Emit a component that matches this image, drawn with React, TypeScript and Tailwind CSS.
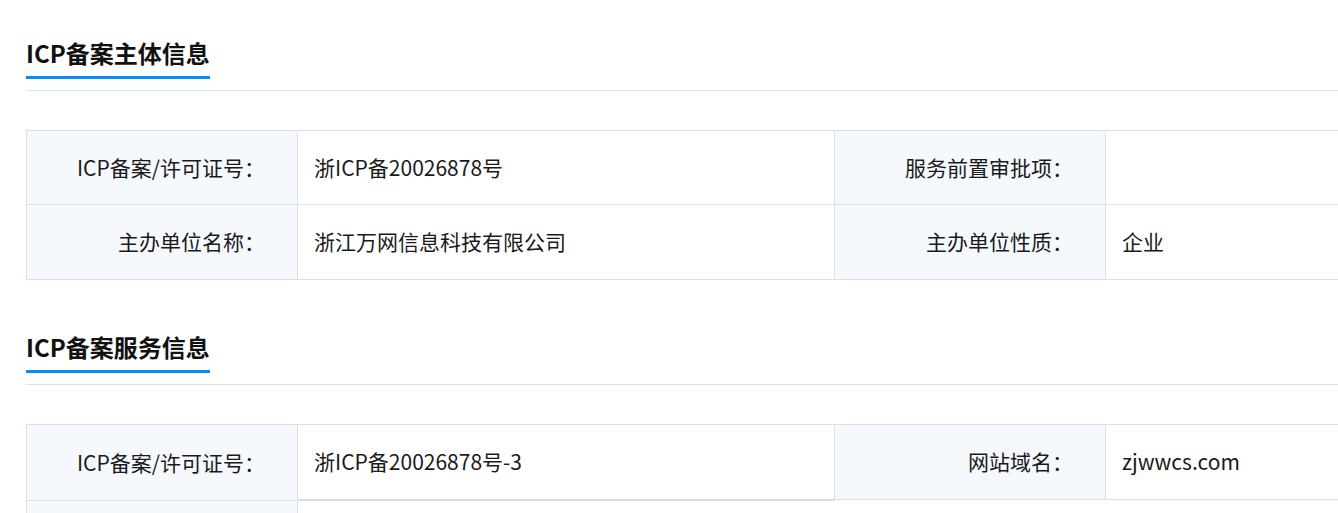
import React from "react";

const font = { fontFamily: '"Noto Sans CJK SC", "Noto Sans", sans-serif' };

function Heading({ title }: { title: string }) {
  return (
    <div className="pt-[37px] pb-[11px] border-b border-[#d3e4f2]">
      <span className="inline-block text-[24px] leading-[32px] font-bold text-[#111] pb-[7px] border-b-[3px] border-[#0a8cf7]">
        {title}
      </span>
    </div>
  );
}

function Label({ children, extra = "" }: { children?: React.ReactNode; extra?: string }) {
  return (
    <div className={`w-[271px] shrink-0 bg-[#f5f9fd] border-r border-[#dcdfe6] flex items-center justify-end pr-[32px] text-[21px] text-[#1a1a1a] ${extra}`}>
      {children}
    </div>
  );
}

function Value({ children, extra = "" }: { children?: React.ReactNode; extra?: string }) {
  return (
    <div className={`w-[537px] shrink-0 bg-white border-r border-[#dcdfe6] flex items-center pl-[16px] text-[21px] text-[#1a1a1a] ${extra}`}>
      {children}
    </div>
  );
}

export default function App() {
  return (
    <div className="w-[1338px] h-[513px] overflow-hidden bg-white" style={font}>
      <div className="w-[1642px] pl-[26px]">
        <Heading title="ICP备案主体信息" />
        <div className="mt-[39px] border border-r-0 border-[#dcdfe6]">
          <div className="flex h-[74px] border-b border-[#d3e4f2]">
            <Label>ICP备案/许可证号：</Label>
            <Value>浙ICP备20026878号</Value>
            <Label>服务前置审批项：</Label>
            <Value></Value>
          </div>
          <div className="flex h-[74px]">
            <Label>主办单位名称：</Label>
            <Value>浙江万网信息科技有限公司</Value>
            <Label>主办单位性质：</Label>
            <Value>企业</Value>
          </div>
        </div>

        <div className="mt-[14px]">
          <Heading title="ICP备案服务信息" />
        </div>
        <div className="mt-[39px] border border-r-0 border-b-0 border-[#dcdfe6]">
          <div className="flex h-[76px]">
            <Label extra="border-b border-b-[#d3e4f2]">ICP备案/许可证号：</Label>
            <Value extra="border-b-2 border-b-[#cfe0ef]">浙ICP备20026878号-3</Value>
            <Label extra="border-b border-b-[#dcdfe6] h-[75px]">网站域名：</Label>
            <Value extra="border-b border-b-[#dcdfe6] h-[75px]">zjwwcs.com</Value>
          </div>
          <div className="flex h-[74px]">
            <Label></Label>
            <div className="flex-1 bg-white"></div>
          </div>
        </div>
      </div>
    </div>
  );
}
